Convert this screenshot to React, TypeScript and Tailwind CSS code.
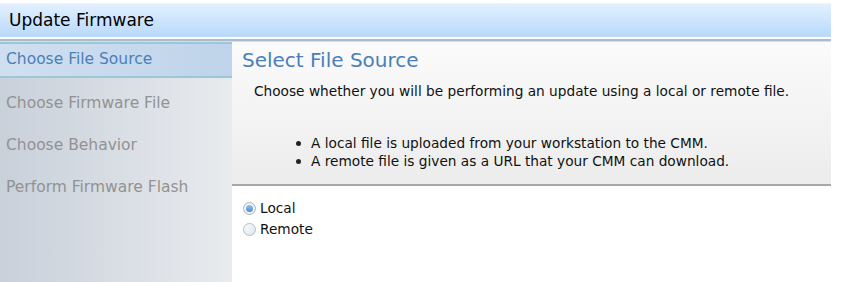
const steps = ['Choose File Source', 'Choose Firmware File', 'Choose Behavior', 'Perform Firmware Flash'];

export default function App() {
  return (
    <div className="w-[831px] h-[282px] bg-white overflow-hidden font-['DejaVu_Sans',sans-serif] text-[13.7px] text-[#111]">
      <div className="mt-[3px] h-[34px] flex items-center px-[9px] border-t border-[#eaf4ff] bg-gradient-to-b from-[#e2f0ff] to-[#b8d9fa] text-[17px] text-black">
        Update Firmware
      </div>
      <div className="mt-[2px] h-[3px] bg-[#a9bccd] border-b border-[#d6dde4]" />
      <div className="flex h-[240px]">
        <div className="w-[232px] bg-gradient-to-r from-[#c8d0da] to-[#e9ebee] flex flex-col text-[15.5px]">
          {steps.map((s, i) =>
            i === 0 ? (
              <div
                key={s}
                className="h-[36px] flex items-center px-[6px] border-y-2 border-[#9cc7d6] bg-gradient-to-r from-[#d0dff0] to-[#bfd4ea] text-[#4a80b8]"
              >
                {s}
              </div>
            ) : (
              <div key={s} className="h-[42px] flex items-center px-[6px] pt-[10px] text-[#929292]">
                {s}
              </div>
            ),
          )}
        </div>
        <div className="flex-1 flex flex-col">
          <div className="h-[144px] bg-gradient-to-b from-[#fbfbfb] to-[#ececec] border-b-2 border-[#a8a8a8] px-[10px]">
            <div className="pt-[6px] text-[20px] text-[#4a80b8] leading-[24px]">Select File Source</div>
            <div className="pt-[11px] pl-[12px] leading-[16px]">
              Choose whether you will be performing an update using a local or remote file.
            </div>
            <ul className="pt-[35px] pl-[54px] leading-[18px]">
              <li className="flex items-center gap-[10px]">
                <span className="w-[5px] h-[5px] rounded-full bg-[#222]" />
                A local file is uploaded from your workstation to the CMM.
              </li>
              <li className="flex items-center gap-[10px]">
                <span className="w-[5px] h-[5px] rounded-full bg-[#222]" />
                A remote file is given as a URL that your CMM can download.
              </li>
            </ul>
          </div>
          <div className="pt-[12px] pl-[11px] flex flex-col leading-[21px]">
            <label className="flex items-center gap-[4px]">
              <span className="w-[13px] h-[13px] rounded-full border border-[#a9b4bf] bg-[#eef3f8] flex items-center justify-center">
                <span className="w-[7px] h-[7px] rounded-full bg-gradient-to-b from-[#94c3ea] to-[#4b8cc9]" />
              </span>
              <span>Local</span>
            </label>
            <label className="flex items-center gap-[4px]">
              <span className="w-[13px] h-[13px] rounded-full border border-[#b2bcc6] bg-gradient-to-br from-[#f9fbfd] to-[#dde6ee]" />
              <span>Remote</span>
            </label>
          </div>
        </div>
      </div>
    </div>
  );
}
